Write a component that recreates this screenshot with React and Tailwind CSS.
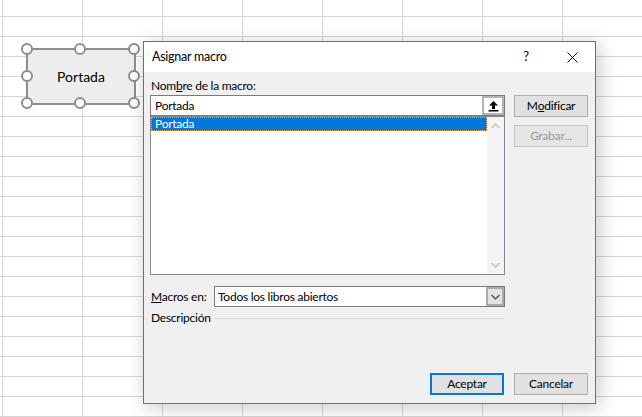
export default function App() {
  const handles = [
    [27, 49], [80, 49], [134, 49],
    [27, 76], [134, 76],
    [27, 103], [80, 103], [134, 103],
  ];
  return (
    <div className="relative w-[642px] h-[417px] overflow-hidden bg-white bg-[linear-gradient(to_right,#d6d6d6_1px,transparent_1px),linear-gradient(to_bottom,#d6d6d6_1px,transparent_1px)] bg-[size:80px_20px] bg-[position:2px_16px] font-['Lato',sans-serif] text-[12px] tracking-[-0.25px] text-black">
      {/* Shape button on the sheet */}
      <div className="absolute left-[26px] top-[48px] w-[110px] h-[57px] border-2 border-[#8e8e8e] bg-[#eeeeee] flex items-center justify-center text-[14px] tracking-normal">
        Portada
      </div>
      {handles.map(([x, y], i) => (
        <div
          key={i}
          className="absolute w-[12px] h-[12px] rounded-full border-2 border-[#8e8e8e] bg-white"
          style={{ left: x - 6, top: y - 6 }}
        />
      ))}

      {/* Dialog */}
      <div className="absolute left-[143px] top-[41px] w-[453px] h-[363px] border border-[#707070] bg-[#f0f0f0] flex flex-col shadow-[3px_3px_18px_rgba(0,0,0,0.22)]">
        {/* Title bar */}
        <div className="h-[30px] bg-white flex items-center">
          <span className="pl-[8px] text-[12.5px]">Asignar macro</span>
          <div className="ml-auto w-[46px] h-full flex items-center justify-center text-[13px]">?</div>
          <div className="w-[46px] h-full flex items-center justify-center">
            <svg width="11" height="11" viewBox="0 0 11 11">
              <path d="M0.5 0.5 L10.5 10.5 M10.5 0.5 L0.5 10.5" stroke="#111" strokeWidth="1" fill="none" />
            </svg>
          </div>
        </div>

        {/* Body */}
        <div className="flex-1 flex flex-col pt-[6px] pl-[6px] pr-[7px] pb-[8px]">
          <div className="flex">
            {/* Left column */}
            <div className="w-[355px] flex flex-col">
              <div className="h-[16px] leading-[16px] pl-[1px]">
                Nom<span className="underline">b</span>re de la macro:
              </div>
              <div className="mt-[1px] h-[21px] border border-[#7a7a7a] bg-white flex items-center">
                <span className="pl-[4px] leading-[16px]">Portada</span>
                <div className="ml-auto w-[22px] h-full border-2 border-[#b4b4b4] bg-white flex items-center justify-center">
                  <svg width="11" height="12" viewBox="0 0 11 12">
                    <path d="M5.5 1 L10 5.5 L7 5.5 L7 9 L4 9 L4 5.5 L1 5.5 Z" fill="#000" />
                    <rect x="0.5" y="10" width="10" height="1.5" fill="#000" />
                  </svg>
                </div>
              </div>
              <div className="h-[159px] border border-[#82868f] bg-white flex">
                <div className="flex-1">
                  <div className="h-[14px] bg-[#0078d7] text-white leading-[12px] border border-dotted border-[#f2a44a] pl-[3px]">
                    Portada
                  </div>
                </div>
                <div className="w-[17px] bg-[#f4f4f4] flex flex-col items-center justify-between py-[6px]">
                  <svg width="9" height="6" viewBox="0 0 9 6">
                    <path d="M0.5 5 L4.5 1 L8.5 5" stroke="#c2c2c2" strokeWidth="1.5" fill="none" />
                  </svg>
                  <svg width="9" height="6" viewBox="0 0 9 6">
                    <path d="M0.5 1 L4.5 5 L8.5 1" stroke="#c2c2c2" strokeWidth="1.5" fill="none" />
                  </svg>
                </div>
              </div>
              <div className="mt-[11px] h-[21px] flex items-center">
                <div className="w-[64px] pl-[1px]">
                  <span className="underline">M</span>acros en:
                </div>
                <div className="flex-1 h-full border border-[#7a7a7a] bg-white flex items-center">
                  <span className="pl-[3px]">Todos los libros abiertos</span>
                  <div className="ml-auto w-[18px] h-full border-2 border-[#acacac] bg-[#e3e3e3] flex items-center justify-center">
                    <svg width="9" height="6" viewBox="0 0 9 6">
                      <path d="M0.5 1 L4.5 5 L8.5 1" stroke="#444" strokeWidth="1.2" fill="none" />
                    </svg>
                  </div>
                </div>
              </div>
              <div className="mt-[3px] h-[16px] flex items-center">
                <div className="w-[64px] pl-[1px] leading-[16px]">Descripción</div>
                <div className="flex-1 h-px bg-[#d9d9d9]" />
              </div>
            </div>

            {/* Right column */}
            <div className="ml-[9px] w-[74px] flex flex-col gap-[8px] pt-[17px]">
              <div className="h-[22px] border border-[#adadad] bg-[#e1e1e1] flex items-center justify-center">
                M<span className="underline">o</span>dificar
              </div>
              <div className="h-[22px] border border-[#c4c4c4] bg-[#e5e5e5] text-[#9a9a9a] flex items-center justify-center">
                Grabar...
              </div>
            </div>
          </div>

          <div className="flex-1" />

          <div className="flex justify-end gap-[10px]">
            <div className="w-[74px] h-[22px] border-2 border-[#0078d7] bg-[#e1e1e1] flex items-center justify-center">
              Aceptar
            </div>
            <div className="w-[74px] h-[22px] border border-[#adadad] bg-[#e1e1e1] flex items-center justify-center">
              Cancelar
            </div>
          </div>
        </div>
      </div>
    </div>
  );
}
